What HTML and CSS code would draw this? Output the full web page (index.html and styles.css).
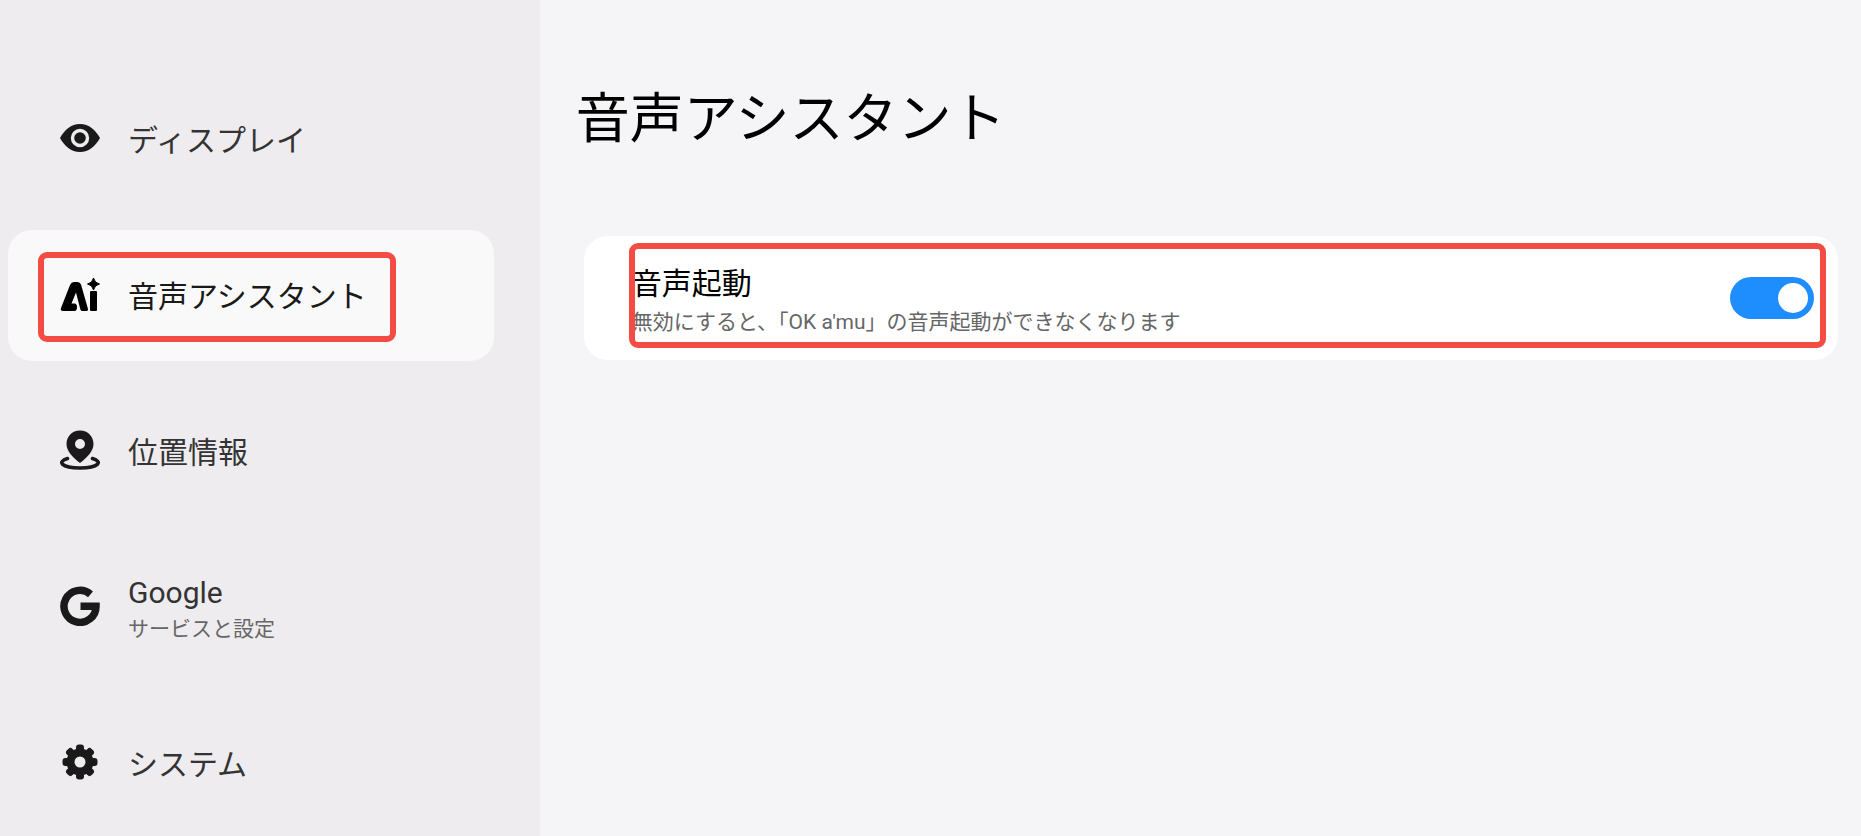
FILE: index.html
```html
<!DOCTYPE html>
<html lang="ja">
<head>
    <meta charset="UTF-8">
    <meta name="viewport" content="width=device-width, initial-scale=1.0">
    <title>音声アシスタント</title>
    <link rel="stylesheet" href="styles.css">
</head>
<body>
    <nav class="sidebar">
        <a class="nav-item" href="#display">
            <svg class="icon" viewBox="0 0 40 40" aria-hidden="true">
                <path fill-rule="evenodd" d="M20 6C11 6 4.500 12 0 20C4.500 28 11 34 20 34S35.500 28 40 20C35.500 12 29 6 20 6ZM20 10.800a9.200 9.200 0 1 1 0 18.400a9.200 9.200 0 1 1 0-18.400Z"/>
                <circle cx="20" cy="20" r="5.800"/>
            </svg>
            <span class="label">ディスプレイ</span>
        </a>
        <a class="nav-item active" href="#assistant">
            <svg class="icon" viewBox="0 0 40 40" aria-hidden="true">
                <path fill-rule="evenodd" d="M10 11Q11.300 8 14 8H17.500Q20 8 21 10.500L28 35Q28.500 37 26.500 37H22.500Q20.800 37 20.400 35.500L16 18.500L11.500 29.500H14.500Q17 29.500 17 33Q17 37 14.500 37H3Q0 37 1 34Z"/>
                <rect x="30" y="17" width="7" height="20" rx="1"/>
                <path d="M33.500 4Q34.500 9 39.500 10Q34.500 11 33.500 16Q32.500 11 27.500 10Q32.500 9 33.500 4Z" stroke="currentColor" stroke-width="1" stroke-linejoin="round"/>
            </svg>
            <span class="label">音声アシスタント</span>
            <span class="highlight"></span>
        </a>
        <a class="nav-item" href="#location">
            <svg class="icon" viewBox="0 0 40 40" aria-hidden="true">
                <path fill-rule="evenodd" d="M20 .5C12 .5 6.500 6.500 6.500 14C6.500 21.500 13 27.500 20 33C27 27.500 33.500 21.500 33.500 14C33.500 6.500 28 .5 20 .5ZM20 9a5 5 0 1 1 0 10a5 5 0 1 1 0-10Z"/>
                <path fill="none" stroke="currentColor" stroke-width="3.500" stroke-linecap="round" d="M7.500 28.500C-3 31.500 1 38 20 38S43 31.500 32.500 28.500"/>
            </svg>
            <span class="label">位置情報</span>
        </a>
        <a class="nav-item" href="#google">
            <svg class="icon" viewBox="0 0 40 40" aria-hidden="true">
                <path fill="none" stroke="currentColor" stroke-width="7.500" d="M30.500 8.300A16 16 0 1 0 36 20.300H20.500"/>
            </svg>
            <span class="label">Google<small class="sub">サービスと設定</small></span>
        </a>
        <a class="nav-item" href="#system">
            <svg class="icon" viewBox="0 0 40 40" aria-hidden="true">
                <rect x="16" y="2.500" width="8" height="35" rx="3"/>
                <rect x="2.500" y="16" width="35" height="8" rx="3"/>
                <rect x="16" y="2.500" width="8" height="35" rx="3" transform="rotate(45 20 20)"/>
                <rect x="16" y="2.500" width="8" height="35" rx="3" transform="rotate(-45 20 20)"/>
                <circle cx="20" cy="20" r="13.500"/>
                <circle class="hole" cx="20" cy="20" r="5.500"/>
            </svg>
            <span class="label">システム</span>
        </a>
    </nav>

    <main class="content">
        <h1>音声アシスタント</h1>
        <div class="card">
            <label class="setting" for="voiceWake">
                <span class="setting-title">音声起動</span>
                <span class="setting-desc">無効にすると、「OK a'mu」の音声起動ができなくなります</span>
            </label>
            <input class="switch" type="checkbox" role="switch" id="voiceWake" checked>
            <span class="highlight"></span>
        </div>
    </main>
</body>
</html>
```
FILE: styles.css
```css
* {
    box-sizing: border-box;
}

body {
    display: flex;
    min-height: 100vh;
    margin: 0;
    font-family: Roboto, "Noto Sans CJK JP", sans-serif;
    background-color: #f5f5f7;
    color: #000;
}

.sidebar {
    display: flex;
    flex-direction: column;
    gap: 25px;
    width: 29%;
    padding: 74px 46px 0 8px;
    background-color: #eeecef;
}

.nav-item {
    position: relative;
    display: flex;
    align-items: center;
    gap: 28px;
    height: 131px;
    padding-left: 52px;
    border-radius: 24px;
    color: #1a1a1a;
    text-decoration: none;
}

.nav-item.active {
    background-color: #f9f9f9;
    color: #000;
}

.icon {
    flex: none;
    width: 40px;
    height: 40px;
    margin-bottom: 4px;
    fill: currentColor;
}

.icon .hole {
    fill: #eeecef;
}

.label {
    padding-top: 2px;
    font-size: 30px;
    line-height: 40px;
    color: #333;
}

.active .label {
    color: #1a1a1a;
}

.sub {
    display: block;
    font-size: 21px;
    line-height: 32px;
    color: #666;
}

.content {
    flex: 1;
    padding: 80px 23px 0 36px;
}

h1 {
    margin: 0 0 76px;
    font-size: 54px;
    font-weight: 400;
    line-height: 80px;
}

.card {
    position: relative;
    display: flex;
    align-items: center;
    justify-content: space-between;
    margin-left: 8px;
    padding: 20px 24px 20px 48px;
    border-radius: 24px;
    background-color: #fff;
}

.setting {
    padding-top: 8px;
}

.setting-title,
.setting-desc {
    display: block;
}

.setting-title {
    font-size: 30px;
    line-height: 40px;
}

.setting-desc {
    font-size: 21px;
    line-height: 36px;
    color: #666;
}

.switch {
    appearance: none;
    width: 84px;
    height: 42px;
    margin: 0;
    padding: 6px;
    border-radius: 21px;
    background-color: #1e8eff;
    cursor: pointer;
}

.switch::before {
    content: "";
    display: block;
    width: 30px;
    height: 30px;
    border-radius: 50%;
    background-color: #fff;
}

.switch:checked::before {
    margin-left: auto;
}

.switch:not(:checked) {
    background-color: #c8c8cc;
}

/* red callout frames drawn over the rows */
.highlight {
    position: absolute;
    border: 6px solid #f24c45;
    border-radius: 9px;
    pointer-events: none;
}

.nav-item .highlight {
    top: 22px;
    right: 98px;
    bottom: 19px;
    left: 30px;
}

.card .highlight {
    top: 7px;
    right: 12px;
    bottom: 12px;
    left: 45px;
}
```
